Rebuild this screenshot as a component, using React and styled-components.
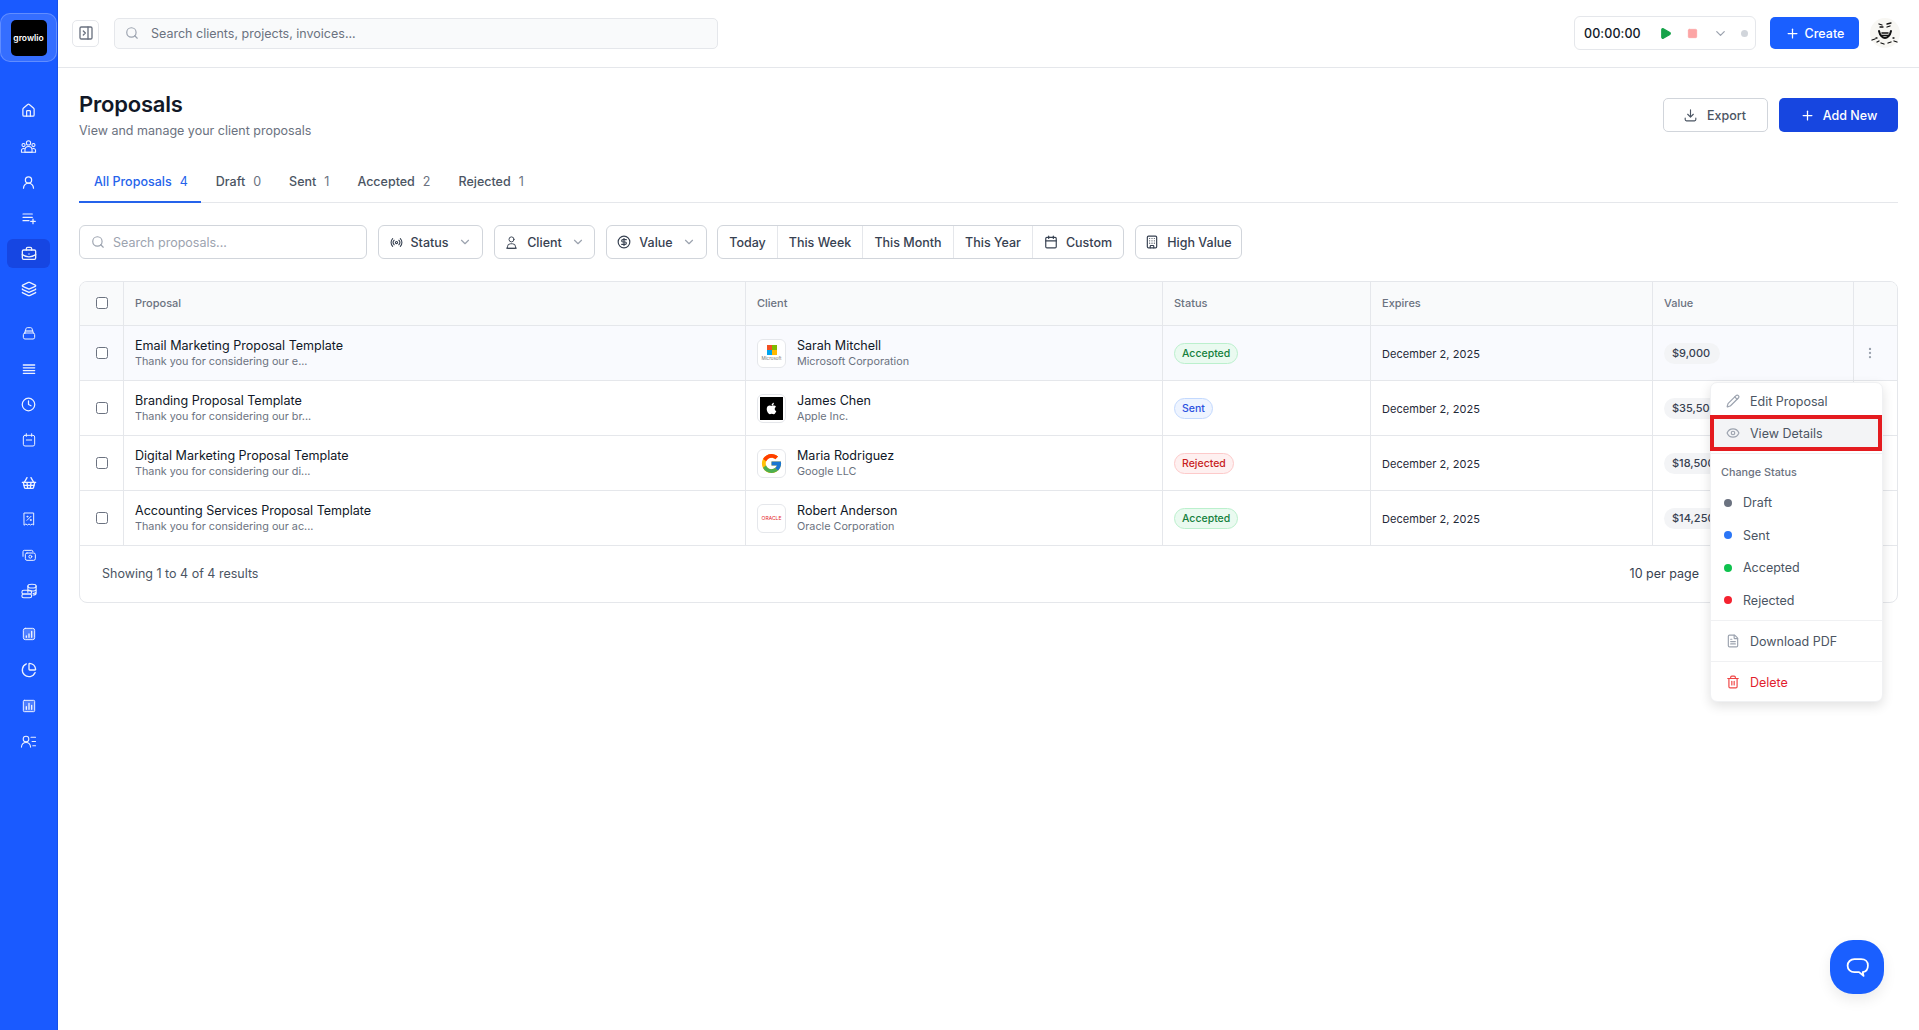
import React from "react";
import styled, { createGlobalStyle } from "styled-components";
import {
  PanelRightClose, Search, Play, Square, ChevronDown, Plus, Radio, CircleDollarSign, Calendar, Building,
  Pencil, Eye, FileText, Trash2, EllipsisVertical, House, UserRound, BriefcaseBusiness, Layers,
  Clock, ShoppingBasket, ChartPie,
} from "lucide-react";
import { FaApple } from "react-icons/fa";
import { FcGoogle } from "react-icons/fc";

const Global = createGlobalStyle`
  html, body { margin: 0; padding: 0; height: 100%; overflow: hidden; background: #fff; }
  body { font-family: Inter, "Liberation Sans", sans-serif; font-size: 12.5px; color: #111827; }
  * { box-sizing: border-box; }
  #root { height: 100%; }
`;

const Shell = styled.div`display: flex; height: 1030px; position: relative; overflow: hidden;`;
const Sidebar = styled.aside`width: 58px; flex: none; background: #1a5aff; display: flex; flex-direction: column; padding-top: 13px; border-right: 1px solid #1750e8;`;
const LogoWrap = styled.div`width: 57px; height: 49px; border: 1px solid rgba(255,255,255,.22); background: rgba(255,255,255,.12); border-radius: 10px; display: flex; align-items: center; justify-content: center; margin-bottom: 34px;`;
const LogoMark = styled.div`width: 36px; height: 36px; background: #000; border-radius: 5px; display: flex; align-items: center; justify-content: center; color: #fff; font-size: 8.5px; font-weight: 600; letter-spacing: 0;`;
const NavGroup = styled.nav`display: flex; flex-direction: column; gap: 6.8px; margin-bottom: 14.3px;`;
const NavItem = styled.div`
  width: 43px; height: 29px; margin-left: 7px; border-radius: 6px; display: flex; align-items: center; justify-content: center; color: #fff;
  background: ${p => (p.$active ? "#1646e2" : "transparent")};
  svg { opacity: .92; }
`;
const Main = styled.main`flex: 1; min-width: 0; display: flex; flex-direction: column;`;
const Topbar = styled.header`height: 68px; flex: none; border-bottom: 1px solid #e5e7eb; display: flex; align-items: center; padding: 0 19px 1px 14px;`;
const SquareBtn = styled.button`width: 27px; height: 27px; border: 1px solid #e5e7eb; background: #fff; border-radius: 5px; padding: 0; display: flex; align-items: center; justify-content: center; color: #6b7280; margin-right: 15px;`;
const GlobalSearch = styled.div`width: 604px; height: 31px; background: #f9fafb; border: 1px solid #e5e7eb; border-radius: 5px; display: flex; align-items: center; gap: 12px; padding-left: 10px; color: #6b7280; font-size: 12.5px;
  svg { color: #9ca3af; }`;
const Spacer = styled.div`flex: 1;`;
const Timer = styled.div`width: 182px; height: 34px; border: 1px solid #e5e7eb; border-radius: 6px; display: flex; align-items: center; padding-left: 9px; margin-right: 14px;`;
const TimeText = styled.span`font-size: 12.5px; font-weight: 500; color: #111827; width: 66px; letter-spacing: .1px;`;
const TimerIcon = styled.span`display: flex; width: ${p => p.$w}px; justify-content: center; color: ${p => p.$c};`;
const TimerDot = styled.span`width: 7px; height: 7px; border-radius: 50%; background: #d1d5db; margin-left: 5px;`;
const Primary = styled.button`
  height: ${p => p.$h}px; width: ${p => p.$w}px; background: ${p => p.$bg}; color: #fff; border: 0; border-radius: 5px; font: 500 12.5px Inter, sans-serif;
  display: flex; align-items: center; justify-content: center; gap: ${p => p.$gap}px; padding: 0;
`;
const Avatar = styled.div`width: 30px; height: 30px; margin-left: 11px; border-radius: 50%; background: #f8f7f3; flex: none;`;
const Content = styled.div`padding: 21px 21px 0; display: flex; flex-direction: column;`;
const PageHead = styled.div`display: flex; align-items: center; justify-content: space-between; height: 51px;`;
const Title = styled.h1`margin: 0; font-size: 22px; line-height: 31px; font-weight: 600; color: #111827; letter-spacing: -.2px;`;
const Sub = styled.p`margin: 1px 0 0; font-size: 12.5px; line-height: 20px; color: #6b7280;`;
const HeadActions = styled.div`display: flex; gap: 11px; margin-top: 1px;`;
const Ghost = styled.button`width: 105px; height: 34px; background: #fff; border: 1px solid #d1d5db; border-radius: 5px; color: #4b5563; font: 500 12.5px Inter, sans-serif; display: flex; align-items: center; justify-content: center; gap: 9px; padding: 0 2px 0 0;`;
const Tabs = styled.div`display: flex; margin-top: 20px; height: 43px; border-bottom: 1px solid #e5e7eb;`;
const Tab = styled.div`
  height: 43px; padding: 1px 13px 0 15px; display: flex; align-items: center; gap: 8px; font-size: 12.5px; font-weight: 500;
  color: ${p => (p.$active ? "#2563eb" : "#4b5563")};
  border-bottom: 2px solid ${p => (p.$active ? "#2563eb" : "transparent")};
`;
const TabCount = styled.span`font-weight: 400; color: ${p => (p.$active ? "#2563eb" : "#6b7280")};`;
const Filters = styled.div`display: flex; margin-top: 22px; height: 34px; align-items: stretch;`;
const FilterSearch = styled.div`width: 288px; border: 1px solid #d1d5db; border-radius: 6px; display: flex; align-items: center; gap: 8px; padding-left: 11px; color: #9ca3af; font-size: 12.5px; margin-right: 11px;`;
const FilterBtn = styled.div`width: ${p => p.$w}px; border: 1px solid #d1d5db; border-radius: 6px; display: flex; align-items: center; justify-content: center; gap: 8px; font-size: 12.5px; font-weight: 500; color: #374151; margin-right: ${p => p.$mr ?? 11}px; background: #fff;`;
const Chev = styled(ChevronDown)`color: #9ca3af; margin-left: 1px;`;
const DateGroup = styled.div`display: flex; border: 1px solid #d1d5db; border-radius: 6px; margin-right: 11px;`;
const DateItem = styled.div`width: ${p => p.$w}px; display: flex; align-items: center; justify-content: center; gap: 8px; font-size: 12.5px; font-weight: 500; color: #374151; border-right: ${p => (p.$last ? "0" : "1px solid #e5e7eb")};`;
const TableCard = styled.div`margin-top: 22px; border: 1px solid #e5e7eb; border-radius: 8px; overflow: hidden; width: 1819px;`;
const Table = styled.table`width: 100%; table-layout: fixed; border-collapse: separate; border-spacing: 0;`;
const Th = styled.th`height: 44px; background: #f9fafb; padding: 0 0 2px ${p => p.$pl ?? 11}px; text-align: left; font-size: 11px; font-weight: 500; color: #6b7280; border-right: ${p => (p.$last ? "0" : "1px solid #e5e7eb")}; border-bottom: 1px solid #e5e7eb;`;
const Td = styled.td`height: 55px; padding: 0 0 0 ${p => p.$pl ?? 11}px; border-right: ${p => (p.$last ? "0" : "1px solid #e5e7eb")}; border-bottom: 1px solid #e5e7eb; background: ${p => (p.$hover ? "#f9fafe" : "#fff")}; vertical-align: middle;`;
const Check = styled.span`display: block; width: 12px; height: 12px; border: 1px solid #6b7280; border-radius: 2.5px; background: #fff; margin-left: 16px;`;
const RowTitle = styled.div`font-size: 12.55px; line-height: 15px; color: #111827; font-weight: 400;`;
const RowSub = styled.div`font-size: 10.8px; line-height: 14px; color: #6b7280; margin-top: 2px;`;
const ClientCell = styled.div`display: flex; align-items: center; gap: 11px;`;
const LogoBox = styled.div`width: 29px; height: 29px; border: 1px solid #e5e7eb; border-radius: 6px; background: #fff; display: flex; flex-direction: column; align-items: center; justify-content: center; overflow: hidden; flex: none;`;
const MsGrid = styled.div`display: grid; grid-template-columns: 5px 5px; gap: 0; width: 10px; height: 10px;`;
const MsCell = styled.span`background: ${p => p.$c};`;
const TinyText = styled.span`font-size: ${p => p.$s}px; line-height: 7px; color: ${p => p.$c}; white-space: nowrap;`;
const AppleBox = styled.div`width: 23px; height: 23px; background: #000; color: #fff; display: flex; align-items: center; justify-content: center;`;
const DateText = styled.div`font-size: 11px; font-weight: 400; color: #1f2937; padding-top: 1px; letter-spacing: .05px;`;
const Pill = styled.span`display: inline-flex; align-items: center; height: 21px; padding: 0 7px; border-radius: 11px; font-size: 10.5px; font-weight: 500; border: 1px solid ${p => p.$b}; background: ${p => p.$bg}; color: ${p => p.$c};`;
const ValuePill = styled.span`display: inline-flex; align-items: center; height: 21px; width: 56px; padding-left: 8px; border-radius: 11px; font-size: 11px; font-weight: 500; background: #f3f4f6; color: #374151;`;
const Kebab = styled.div`display: flex; justify-content: center; color: #9ca3af; padding-right: 14px;`;
const TableFooter = styled.div`height: 56px; display: flex; align-items: center; justify-content: space-between; padding: 0 198px 1px 22px; font-size: 12.5px; color: #4b5563;`;
const PerPage = styled.span`color: #374151;`;
const Menu = styled.div`position: absolute; left: 1710px; top: 382px; width: 173px; background: #fff; border: 1px solid #f0f1f3; border-radius: 7px; box-shadow: 0 4px 12px rgba(0,0,0,.12); padding: 2px 0 3px;`;
const MenuItem = styled.div`height: 32px; display: flex; align-items: center; gap: 10px; padding-left: 15px; font-size: 12.5px; color: ${p => p.$danger ? "#e11d2e" : "#4b5563"}; background: ${p => p.$hl ? "#f3f4f6" : "transparent"};
  svg { color: ${p => p.$danger ? "#ef4444" : "#9ca3af"}; }`;
const MenuDivider = styled.div`height: 1px; background: #f0f1f3; margin: 4px 0;`;
const MenuLabel = styled.div`height: 28px; display: flex; align-items: center; padding-left: 10px; font-size: 10.8px; font-weight: 500; color: #6b7280;`;
const StatusItem = styled.div`height: 32.5px; display: flex; align-items: center; gap: 11px; padding: 1px 0 0 13px; font-size: 12.5px; color: #4b5563;`;
const Dot = styled.span`width: 8px; height: 8px; border-radius: 50%; background: ${p => p.$c};`;
const Highlight = styled.div`position: absolute; left: 1710px; top: 415px; width: 172px; height: 36px; border: 4px solid #e41b1f; pointer-events: none;`;
const ChatBtn = styled.div`position: absolute; left: 1830px; top: 940px; width: 54px; height: 54px; background: #1a5fff; border-radius: 23px; display: flex; align-items: center; justify-content: center; color: #fff; box-shadow: 0 6px 14px rgba(0,0,0,.08);`;

const Svg = ({ children, size = 16, sw = 1.5 }) => (
  <svg width={size} height={size} viewBox="0 0 24 24" fill="none" stroke="currentColor" strokeWidth={sw} strokeLinecap="round" strokeLinejoin="round">{children}</svg>
);
const IGroup = () => <Svg size={17}><circle cx="12" cy="7" r="3"/><circle cx="5" cy="10" r="2.2"/><circle cx="19" cy="10" r="2.2"/><path d="M7 20v-3a5 5 0 0 1 10 0v3z"/><path d="M2 20v-2a3 3 0 0 1 4-3M22 20v-2a3 3 0 0 0-4-3M2 20h20"/></Svg>;
const IListPlus = () => <Svg size={16} sw={1.8}><path d="M3 6h14M3 11h14M3 16h9M18 13.500v7M14.500 17h7"/></Svg>;
const IBag = () => <Svg><rect x="3.5" y="12" width="17" height="9" rx="2.5"/><path d="M5.5 12l2-6.5a2 2 0 0 1 2-1.5h5a2 2 0 0 1 2 1.5l2 6.5" /><path d="M7 9h10" strokeWidth="3" opacity=".6"/></Svg>;
const IRows = () => <Svg sw={2}><path d="M3.5 6h17M3.5 10.2h17M3.5 14.4h17M3.5 18.5h17"/></Svg>;
const ICal = () => <Svg><rect x="3.5" y="5" width="17" height="16" rx="2.5"/><path d="M8 2.5v4M16 2.5v4M8 12h8"/></Svg>;
const IReceipt = () => <Svg><path d="M5 3h14v18l-2.3-1.5L14.3 21 12 19.5 9.7 21l-2.4-1.5L5 21z"/><path d="M9 14l6-6"/><circle cx="9.5" cy="8.5" r=".8"/><circle cx="14.5" cy="13.5" r=".8"/></Svg>;
const IMoney = () => <Svg><path d="M3 14V7a2 2 0 0 1 2-2h11a2 2 0 0 1 2 2"/><rect x="6.5" y="9" width="15" height="11" rx="2.5"/><circle cx="14" cy="14.5" r="2.2"/></Svg>;
const ICoins = () => <Svg size={18}><ellipse cx="16" cy="5.5" rx="5.5" ry="2.5"/><path d="M10.5 5.5v8M21.5 5.5v9.5c0 1.3-2 2.3-4 2.4M10.5 9.5c0 1.4 2.5 2.5 5.5 2.5s5.5-1.1 5.5-2.5M21.5 13c0 1.2-1.8 2.2-4 2.4"/><rect x="2.5" y="11" width="13" height="5" rx="2.5"/><rect x="2.5" y="16" width="13" height="5" rx="2.5"/></Svg>;
const IChartA = () => <Svg><rect x="3.5" y="3.5" width="17" height="17" rx="3" fill="rgba(255,255,255,.25)"/><path d="M8 17v-2M12 17v-5M16 17V8" strokeWidth="2"/></Svg>;
const IChartB = () => <Svg><rect x="3.5" y="3.5" width="17" height="17" rx="1.5" fill="rgba(255,255,255,.25)"/><path d="M8 17v-4M12 17V8M16 17v-6" strokeWidth="2"/></Svg>;
const IUserList = () => <Svg size={17}><circle cx="8.5" cy="8.5" r="4"/><path d="M2 20c.5-4 3-6.5 6.5-6.5s6 2.5 6.5 6.5M15.5 6H22M17 12h5M18 18h4"/></Svg>;
const IExport = () => <Svg size={15} sw={1.8}><path d="M12 3v11M7.5 10l4.5 4.5 4.5-4.5M3.5 16v2.5a2 2 0 0 0 2 2h13a2 2 0 0 0 2-2V16"/></Svg>;
const IUser2 = () => <Svg size={15}><circle cx="12" cy="7" r="4"/><path d="M5.5 21v-2a5 5 0 0 1 5-5h3a5 5 0 0 1 5 5v2zM4 21h16"/></Svg>;
const IBubble = () => <Svg size={25} sw={1.7}><path d="M9 4h6.5C19.6 4 22 6.5 22 10s-2 6-5 6.5l.8 3.5-4.3-3.5H9c-3.6 0-6.5-2.7-6.5-6.3S5.4 4 9 4z"/></Svg>;

const groups = [
  [[<House size={15} />], [<IGroup />], [<UserRound size={15} />], [<IListPlus />], [<BriefcaseBusiness size={16} />, true], [<Layers size={16} />]],
  [[<IBag />], [<IRows />], [<Clock size={15} />], [<ICal />]],
  [[<ShoppingBasket size={16} />], [<IReceipt />], [<IMoney />], [<ICoins />]],
  [[<IChartA />], [<ChartPie size={16} />], [<IChartB />], [<IUserList />]],
];

const MsLogo = () => (
  <LogoBox>
    <MsGrid><MsCell $c="#f25022" /><MsCell $c="#7fba00" /><MsCell $c="#00a4ef" /><MsCell $c="#ffb900" /></MsGrid>
    <TinyText $s={4.5} $c="#737373">Microsoft</TinyText>
  </LogoBox>
);
const AppleLogo = () => <LogoBox><AppleBox><FaApple size={13} /></AppleBox></LogoBox>;
const GoogleLogo = () => <LogoBox><FcGoogle size={23} /></LogoBox>;
const OracleLogo = () => <LogoBox><TinyText $s={5} $c="#e5252a">ORACLE</TinyText></LogoBox>;

const pills = {
  Accepted: { $b: "#bbf0cd", $bg: "#eafaf0", $c: "#15803d" },
  Sent: { $b: "#c3d9fe", $bg: "#eef4ff", $c: "#2b50e0" },
  Rejected: { $b: "#fdcaca", $bg: "#fef0f0", $c: "#c81e1e" },
};

const rows = [
  { t: "Email Marketing Proposal Template", s: "Thank you for considering our e...", n: "Sarah Mitchell", c: "Microsoft Corporation", st: "Accepted", v: "$9,000", L: MsLogo, hover: true },
  { t: "Branding Proposal Template", s: "Thank you for considering our br...", n: "James Chen", c: "Apple Inc.", st: "Sent", v: "$35,500", L: AppleLogo },
  { t: "Digital Marketing Proposal Template", s: "Thank you for considering our di...", n: "Maria Rodriguez", c: "Google LLC", st: "Rejected", v: "$18,500", L: GoogleLogo },
  { t: "Accounting Services Proposal Template", s: "Thank you for considering our ac...", n: "Robert Anderson", c: "Oracle Corporation", st: "Accepted", v: "$14,250", L: OracleLogo },
];

const widths = [44, 622, 417, 208, 282, 201, 45];

export default function App() {
  return (
    <Shell>
      <Global />
      <Sidebar>
        <LogoWrap><LogoMark>growlio</LogoMark></LogoWrap>
        {groups.map((g, i) => (
          <NavGroup key={i}>
            {g.map(([icon, active], j) => <NavItem key={j} $active={active}>{icon}</NavItem>)}
          </NavGroup>
        ))}
      </Sidebar>
      <Main>
        <Topbar>
          <SquareBtn><PanelRightClose size={16} /></SquareBtn>
          <GlobalSearch><Search size={14} />Search clients, projects, invoices...</GlobalSearch>
          <Spacer />
          <Timer>
            <TimeText>00:00:00</TimeText>
            <TimerIcon $w={30} $c="#16a34a"><Play size={13} fill="#16a34a" /></TimerIcon>
            <TimerIcon $w={24} $c="#fca5a5"><Square size={11} fill="#fca5a5" /></TimerIcon>
            <TimerIcon $w={32} $c="#9ca3af"><ChevronDown size={15} /></TimerIcon>
            <TimerDot />
          </Timer>
          <Primary $w={89} $h={32} $bg="#1a5fff" $gap={5}><Plus size={15} />Create</Primary>
          <Avatar>
            <svg width="30" height="30" viewBox="0 0 30 30" fill="none" stroke="#111" strokeWidth="1.3" strokeLinecap="round">
              <path d="M9 6l3 1M17 6l4-1M10 9l3 0M17 9l3-1" />
              <path d="M9 13c1 5 4 7 6 7s5-2 6-7" strokeWidth="2" />
              <path d="M12 15l6 0M11 17.5h8" strokeWidth="1.6" />
              <path d="M2 22l3-1M7 24l2-1M11 25l3 1M18 25l3-1M24 23l3 1M6 20l1 0M23 20l1 0" />
            </svg>
          </Avatar>
        </Topbar>
        <Content>
          <PageHead>
            <div>
              <Title>Proposals</Title>
              <Sub>View and manage your client proposals</Sub>
            </div>
            <HeadActions>
              <Ghost><IExport />Export</Ghost>
              <Primary $w={119} $h={34} $bg="#1746e0" $gap={8}><Plus size={15} />Add New</Primary>
            </HeadActions>
          </PageHead>
          <Tabs>
            <Tab $active>All Proposals<TabCount $active>4</TabCount></Tab>
            <Tab>Draft<TabCount>0</TabCount></Tab>
            <Tab>Sent<TabCount>1</TabCount></Tab>
            <Tab>Accepted<TabCount>2</TabCount></Tab>
            <Tab>Rejected<TabCount>1</TabCount></Tab>
          </Tabs>
          <Filters>
            <FilterSearch><Search size={14} />Search proposals...</FilterSearch>
            <FilterBtn $w={105}><Radio size={13} />Status<Chev size={14} /></FilterBtn>
            <FilterBtn $w={101}><IUser2 />Client<Chev size={14} /></FilterBtn>
            <FilterBtn $w={101} $mr={10}><CircleDollarSign size={14} />Value<Chev size={14} /></FilterBtn>
            <DateGroup>
              <DateItem $w={60}>Today</DateItem>
              <DateItem $w={85}>This Week</DateItem>
              <DateItem $w={91}>This Month</DateItem>
              <DateItem $w={79}>This Year</DateItem>
              <DateItem $w={90} $last><Calendar size={14} />Custom</DateItem>
            </DateGroup>
            <FilterBtn $w={107} $mr={0}><Building size={14} />High Value</FilterBtn>
          </Filters>
          <TableCard>
            <Table>
              <colgroup>{widths.map((w, i) => <col key={i} style={{ width: w }} />)}</colgroup>
              <thead>
                <tr>
                  <Th $pl={0}><Check /></Th>
                  <Th>Proposal</Th><Th>Client</Th><Th>Status</Th><Th>Expires</Th><Th>Value</Th><Th $last />
                </tr>
              </thead>
              <tbody>
                {rows.map(r => (
                  <tr key={r.t}>
                    <Td $pl={0} $hover={r.hover}><Check /></Td>
                    <Td $hover={r.hover}><RowTitle>{r.t}</RowTitle><RowSub>{r.s}</RowSub></Td>
                    <Td $hover={r.hover}>
                      <ClientCell>
                        <r.L />
                        <div><RowTitle>{r.n}</RowTitle><RowSub>{r.c}</RowSub></div>
                      </ClientCell>
                    </Td>
                    <Td $hover={r.hover}><Pill {...pills[r.st]}>{r.st}</Pill></Td>
                    <Td $hover={r.hover}><DateText>December 2, 2025</DateText></Td>
                    <Td $hover={r.hover}><ValuePill>{r.v}</ValuePill></Td>
                    <Td $pl={0} $last $hover={r.hover}>{r.hover && <Kebab><EllipsisVertical size={14} /></Kebab>}</Td>
                  </tr>
                ))}
              </tbody>
            </Table>
            <TableFooter><span>Showing 1 to 4 of 4 results</span><PerPage>10 per page</PerPage></TableFooter>
          </TableCard>
        </Content>
      </Main>
      <Menu>
        <MenuItem><Pencil size={14} />Edit Proposal</MenuItem>
        <MenuItem $hl><Eye size={14} />View Details</MenuItem>
        <MenuDivider />
        <MenuLabel>Change Status</MenuLabel>
        <StatusItem><Dot $c="#6b7280" />Draft</StatusItem>
        <StatusItem><Dot $c="#2b76f6" />Sent</StatusItem>
        <StatusItem><Dot $c="#0ec24e" />Accepted</StatusItem>
        <StatusItem><Dot $c="#f4222f" />Rejected</StatusItem>
        <MenuDivider />
        <MenuItem><FileText size={14} />Download PDF</MenuItem>
        <MenuDivider />
        <MenuItem $danger><Trash2 size={14} />Delete</MenuItem>
      </Menu>
      <Highlight />
      <ChatBtn><IBubble /></ChatBtn>
    </Shell>
  );
}
